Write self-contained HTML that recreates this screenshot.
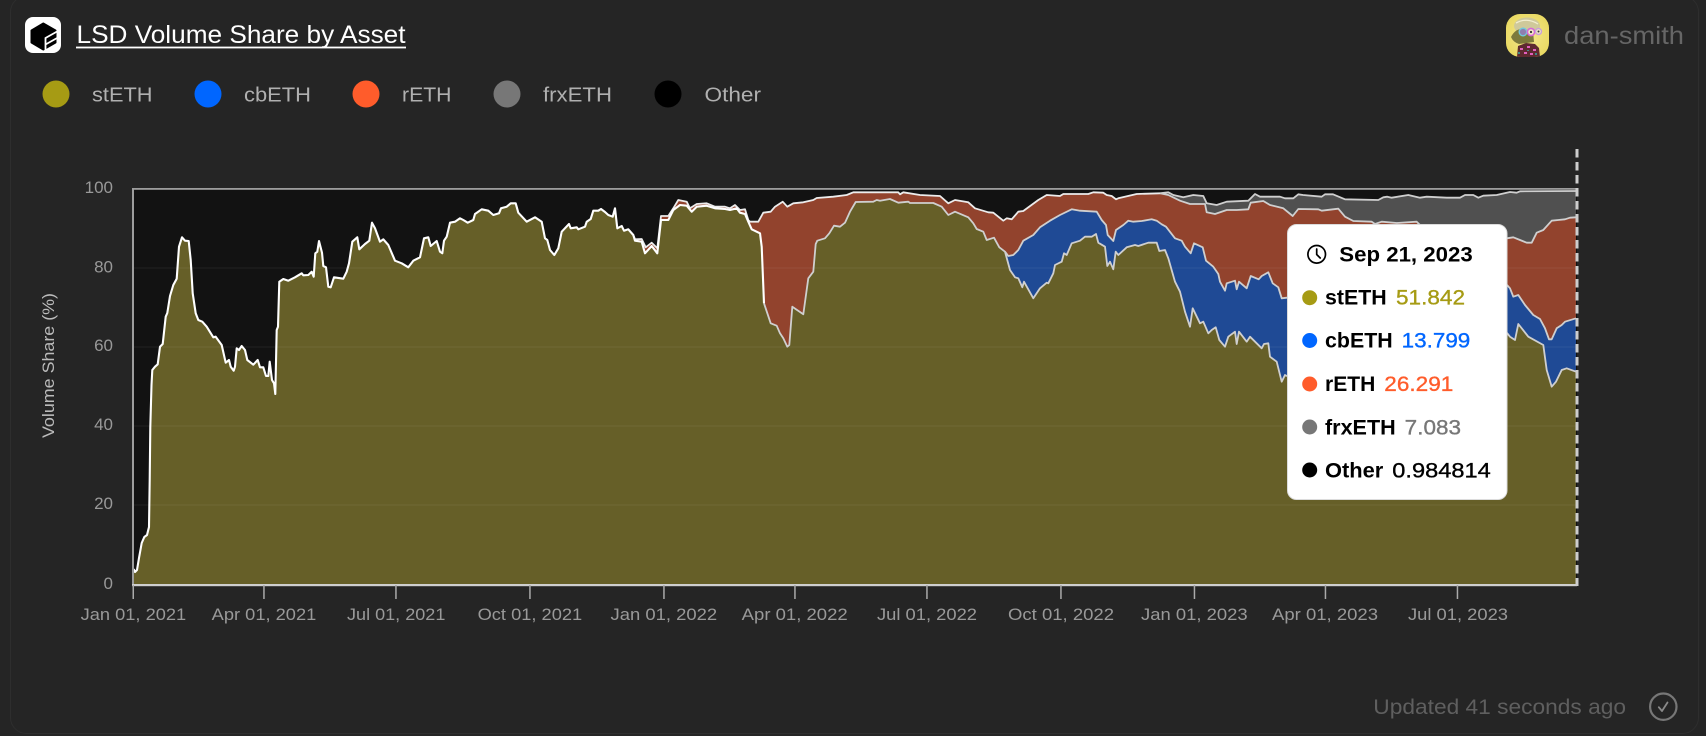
<!DOCTYPE html>
<html>
<head>
<meta charset="utf-8">
<title>LSD Volume Share by Asset</title>
<style>
html,body{margin:0;padding:0;background:#252525;width:1706px;height:736px;overflow:hidden}
svg{display:block}
text{font-family:"Liberation Sans",sans-serif}
.leg{font-size:20px;fill:#b0b0b0}
.tick{font-size:17px;fill:#999}
.lb{font-size:21px;font-weight:700;fill:#000}
.val{font-size:21px;stroke-width:.35}
</style>
</head>
<body>
<svg width="1706" height="736" viewBox="0 0 1706 736" xmlns="http://www.w3.org/2000/svg">
<defs>
<clipPath id="leftpart"><rect x="120" y="150" width="640" height="450"/></clipPath>
<clipPath id="av"><rect x="1506" y="14" width="43" height="43" rx="14"/></clipPath>
<radialGradient id="avg" cx="50%" cy="50%" r="65%"><stop offset="0" stop-color="#f3e88f"/><stop offset="1" stop-color="#e8d75c"/></radialGradient>
</defs>
<rect width="1706" height="736" fill="#252525"/>
<rect x="10.5" y="-4" width="1688" height="737.5" rx="16" fill="#252525" stroke="#2e2e2e" stroke-width="1"/>

<!-- header -->
<rect x="25" y="17" width="36" height="36" rx="8" fill="#fff"/>
<polygon points="43.3,23.5 55.5,30.5 55.5,42.5 43.3,49.5 31.5,42.5 31.5,30.5" fill="#000" stroke="#000" stroke-width="2" stroke-linejoin="round"/>
<path d="M45.5 52V38L58 31M45.5 44.5L58 37.5" fill="none" stroke="#fff" stroke-width="1.8"/>
<text x="76.5" y="43" font-size="25" fill="#fff" textLength="329" lengthAdjust="spacingAndGlyphs">LSD Volume Share by Asset</text>
<rect x="76" y="46.6" width="330" height="1.8" fill="#fff"/>

<g clip-path="url(#av)">
<rect x="1506" y="14" width="43" height="43" fill="url(#avg)"/>
<ellipse cx="1527" cy="26" rx="13" ry="8.5" fill="#cfc99a"/>
<path d="M1516 23Q1527 17 1538 24" fill="none" stroke="#f2eed0" stroke-width="1.3"/>
<path d="M1511 37Q1515 29 1522 29L1533 31L1534 42L1519 44Q1513 42 1511 37Z" fill="#7d7a3c"/>
<circle cx="1523" cy="32" r="3.8" fill="#8f7fb0" stroke="#71c9dc" stroke-width="1.4"/>
<circle cx="1531" cy="32" r="3.6" fill="#efe9c4" stroke="#d767d8" stroke-width="1.6"/>
<circle cx="1538.5" cy="31.5" r="3" fill="#efe9c4" stroke="#c9a0d8" stroke-width="1.4"/>
<circle cx="1531" cy="32" r="1.1" fill="#333"/>
<circle cx="1538.5" cy="31.5" r="1" fill="#333"/>
<path d="M1517 57L1518 46L1526 43L1535 44L1539 48L1540 57Z" fill="#5e2a30"/>
<path d="M1520 48h3v2h-3zM1527 46h3v2h-3zM1533 49h3v2h-3zM1524 52h3v2h-3zM1530 53h3v2h-3z" fill="#e25fc0"/>
<path d="M1518 52h2v2h-2zM1535 53h2v2h-2zM1527 50h2v1h-2z" fill="#3f8a88"/>
</g>
<text x="1564" y="44" font-size="25" fill="#666" textLength="120" lengthAdjust="spacingAndGlyphs">dan-smith</text>

<!-- legend -->
<circle cx="56" cy="94" r="13.5" fill="#a69b14"/>
<text class="leg" x="92" y="101.5" textLength="60.5" lengthAdjust="spacingAndGlyphs">stETH</text>
<circle cx="208" cy="94" r="13.5" fill="#0066ff"/>
<text class="leg" x="244" y="101.5" textLength="67" lengthAdjust="spacingAndGlyphs">cbETH</text>
<circle cx="366" cy="94" r="13.5" fill="#ff5c2b"/>
<text class="leg" x="402" y="101.5" textLength="49.5" lengthAdjust="spacingAndGlyphs">rETH</text>
<circle cx="507" cy="94" r="13.5" fill="#777"/>
<text class="leg" x="543" y="101.5" textLength="69" lengthAdjust="spacingAndGlyphs">frxETH</text>
<circle cx="668" cy="94" r="13.5" fill="#000"/>
<text class="leg" x="704.5" y="101.5" textLength="56.5" lengthAdjust="spacingAndGlyphs">Other</text>

<!-- plot -->
<rect x="133" y="189" width="1444" height="396" fill="#121212"/>

<!-- frx area -->
<polygon fill="#505050" points="1160,193.3 1168.3,192.3 1173.3,195 1183.3,197.3 1193.3,195 1203.3,196 1206.7,203.3 1216.7,205 1226.7,201.7 1248.3,200.7 1255,194 1260,196.7 1280,196.7 1285,198.3 1293.3,198.3 1298.3,194.3 1303,195 1321.7,196.7 1325,194.3 1333,194.3 1345,199.3 1378.3,200 1383.3,197.3 1387.3,196.7 1391.7,197.7 1408.3,195 1420,197.7 1426.7,196.7 1446.7,197.7 1460,197.7 1465,195 1473.3,195 1478.3,197.7 1483.3,195.7 1496.7,195 1510,192 1516.7,192.7 1520,191.3 1576,191 1576,300 1160,300"/>

<!-- red area -->
<polygon fill="#92432d" points="633.3,235 635,239.3 641.7,239 645.7,247.3 651.7,242.7 657.3,248.3 661,216 668.3,216 673.3,208.3 678.3,200 686.7,201.7 690,208.3 696.7,204 706.7,203.3 715,206.7 725,206.7 730,208.3 735,205 740,210 745,209.3 748.3,220 750,221.7 758.3,221.7 763.3,212.7 770.7,211.7 775,206.7 782.7,201.7 787.3,206.7 793.3,203.3 803.3,202.3 813.3,200 816.7,198 833.3,196.7 846.7,195 853.3,192.3 898.3,192.3 900,194.3 903.3,192.3 920,195 940,196 948.3,203.3 955,200 968.3,202.3 975,208.3 988.3,212.3 993.3,212.7 1003.3,220.7 1006.7,218.3 1011.7,219.3 1018.3,211.7 1023.3,211 1038.3,200 1046.7,195 1060,196 1063.3,194 1088.3,194 1093.3,192.3 1103.3,192.7 1106.7,195 1111.7,196 1116,199.3 1118.3,198.3 1136.7,194 1160,193.3 1168.3,195 1180,200.7 1190,204 1205,204 1206.7,212.3 1215,214 1226.7,210 1236.7,210 1248.3,209.3 1250.7,202.7 1263.3,201 1270,205 1283.3,208.3 1292.7,216 1298.3,209 1318.3,209.3 1321.7,210.7 1338.3,208.7 1345,216.7 1353.3,221 1371.7,221.7 1375,224 1381.7,221.7 1396.7,223 1416.7,221.7 1420,225 1507,238.3 1513.3,237.3 1520,240 1526.7,242.7 1531.7,242.7 1536.7,232.7 1543.3,230 1551.7,220.7 1558.3,220 1565,219.3 1570,217.7 1576,217.3 1576,585 633,585"/>

<!-- blue area -->
<polygon fill="#1f4a95" points="1005,251.7 1008.3,256 1013.3,255 1018.3,250 1023.3,240.7 1033.3,235 1040,227.3 1050,220.7 1060,215 1071.7,209.3 1080,210.7 1096.7,211.7 1101.7,220 1106,225 1107.7,235 1113.3,241 1116,230 1123.3,225 1128.3,220.7 1133.3,221.7 1141.7,221 1151.7,219.3 1156.7,220.7 1161.7,224.3 1166,226.7 1175,238.3 1181.7,240.7 1185,246.7 1190.7,253.3 1194,243.3 1202.7,247.3 1206,260.7 1213.3,266.7 1218.3,274 1220,281.7 1225,290.7 1226.7,283.3 1235,280.7 1236.7,289.3 1239,281.7 1246.7,288.3 1250.7,276 1258.7,279.3 1261.7,276 1268.3,272.3 1272.7,283.3 1278.3,287.3 1281.7,298.3 1287,297.7 1507,285 1510,288.3 1513.3,296.7 1518.3,295 1525,305 1533.3,315 1540,319 1545,328.3 1549,339.3 1551.7,339.3 1556.7,328.3 1561.7,325 1565,321.7 1576,318.3 1576,585 1005,585"/>

<!-- stETH area -->
<polygon fill="#665f28" points="133.7,569 135,572 137,570 139,558 141.7,543 144.3,537 147,535 149,527 149.7,480 150.3,427 151.5,385 152.3,370 155,366.7 157.7,364.3 160,346.7 162.7,344 165.7,316.7 167.3,313 170,296 173.3,285 176.7,278.7 179,246.7 182,237.3 185,240.7 188.7,241 190.7,260 192.7,293.3 195.7,313.3 198.3,320 202.3,321.7 206.7,326.7 213.3,337.3 215.7,336.7 221.7,345 225.7,362.7 229,360 230.7,366.7 233.7,370.7 235,366.7 236.7,348.3 239,350 241.7,346 245,350 247.3,360 253.3,364.7 257.7,360 260,367.3 263.3,367.3 266,376 268.3,376 269.7,361.7 272,380 274,383.3 275.3,394 276.7,330 278,326.7 279.3,281.7 283.3,279 288.3,280.7 295,277.3 301.7,273.3 303.3,275.3 308.3,275 311.7,271.7 313.7,276.7 315.3,253.3 317.3,251.7 319,241 322,252.7 323.3,266 326,267.3 328.3,286.7 330.7,287.3 334,277.3 343.3,278.7 346.7,271.7 349,263.3 352.3,241.7 357.3,237.3 359.3,249.3 365,244 369.3,240.7 372,222.7 375,228.3 380,241.7 383.3,239.3 388.3,245 393.3,256.7 395,260.7 401.7,263.3 408.3,267.3 413.3,260.7 420,257.3 424,238.3 428.3,237.3 430.7,246 436.7,241 440,251.7 442.3,253.3 444,240.7 446.7,236.7 450,222.7 455,221.7 460,218.3 463.3,220 467.7,222.7 473.3,220 475,214 481.7,209.3 488.3,210.7 493.3,215 499,213.3 501,208.3 506.7,206.7 510.7,203.3 515.7,203.3 518.3,212.7 526.7,221.7 535,217.3 541.7,221.7 545,238.3 547.3,240 550,250 554.3,255 558.3,248.3 561.7,231.7 569,224 570.7,228.3 576.7,227.3 578.3,229.3 585,226.7 586.7,221.7 590.7,219 593.3,210.7 598.3,210.7 601,209 605,212 608.3,215 612.7,216.7 615,208.3 617.3,228.3 621.7,226 624,230.7 628.3,229.3 633.3,235 635,240.7 641.7,241.7 645,253.3 651.7,246 657.3,253.3 661,220 668.3,220 673.3,210 680,205 686.7,205.7 691.7,211.7 696.7,206.7 706.7,205.7 715,208.3 725,209 730,210 736.7,208.3 740,212.7 745,214 748.3,221.7 751.7,229.3 760,233.3 761.7,246.7 764,303.3 770.7,323.3 776.7,325.7 780,333.3 783.3,338.3 787.3,346.7 789.3,345 792.3,306.7 803.3,314.3 808.3,278.3 813.3,271.7 815.7,244 817.3,240.7 825,238.3 829.3,233.3 834,225.7 840,226.7 845,222.7 850,211.7 855.7,202 873.3,201.7 876.7,200 880,200.7 890,199 898.3,202.7 908.3,201.7 910,203 933.3,203 941.7,206.7 948.3,215 955,211.7 968.3,217.3 973.3,223.3 976.7,229 983.3,231.7 986.7,240 994,237.7 999.3,247.3 1005,251.7 1010,270 1015,277.3 1018.3,278.3 1022.3,287.3 1024,281.7 1033.3,298.3 1040,288.3 1046.7,282.7 1048.3,283.3 1053.3,273.3 1055,265 1061.7,261.7 1064,253.3 1066.7,255 1071.7,243.3 1080,240.7 1085,236.7 1091.7,236.7 1096,234 1098.3,242.7 1105,246.7 1107.3,266 1110,261.7 1113.3,269.3 1115.7,251.7 1118.3,255 1126.7,247.3 1135,245 1138.3,246 1148.3,242.7 1156.7,242.7 1159.3,251 1165,250 1168.3,258.3 1175,281.7 1180,291.7 1185,311.7 1190,326.7 1192.7,308.3 1200,323.3 1203.3,321.7 1208.3,333.3 1211.7,330 1215.7,327.3 1219.3,340 1225,346.7 1228.3,336.7 1235,331.7 1236.7,344 1239,331.7 1246.7,341.7 1250,336.7 1261.7,348.3 1264,344 1268.3,343.3 1270,356.7 1276.7,361.7 1281.7,381.7 1285,375 1287,376 1507,333 1510,336.7 1515,340 1518.3,324 1528.3,336.7 1543.3,345 1546.7,370 1551.7,386.7 1556,381.7 1561.7,370 1566.7,368.3 1576,371.7 1576,585 133,585"/>

<!-- gridlines -->
<g fill="#fff" fill-opacity=".035">
<rect x="134" y="267" width="1442" height="2"/>
<rect x="134" y="346" width="1442" height="2"/>
<rect x="134" y="425" width="1442" height="2"/>
<rect x="134" y="504" width="1442" height="2"/>
</g>

<!-- lines -->
<g fill="none" stroke-linejoin="round">
<polyline stroke="#cfcfcf" stroke-width="1.8" points="1160,193.3 1168.3,192.3 1173.3,195 1183.3,197.3 1193.3,195 1203.3,196 1206.7,203.3 1216.7,205 1226.7,201.7 1248.3,200.7 1255,194 1260,196.7 1280,196.7 1285,198.3 1293.3,198.3 1298.3,194.3 1303,195 1321.7,196.7 1325,194.3 1333,194.3 1345,199.3 1378.3,200 1383.3,197.3 1387.3,196.7 1391.7,197.7 1408.3,195 1420,197.7 1426.7,196.7 1446.7,197.7 1460,197.7 1465,195 1473.3,195 1478.3,197.7 1483.3,195.7 1496.7,195 1510,192 1516.7,192.7 1520,191.3 1576,191"/>
<polyline stroke="#ececec" stroke-width="1.8" points="633.3,235 635,239.3 641.7,239 645.7,247.3 651.7,242.7 657.3,248.3 661,216 668.3,216 673.3,208.3 678.3,200 686.7,201.7 690,208.3 696.7,204 706.7,203.3 715,206.7 725,206.7 730,208.3 735,205 740,210 745,209.3 748.3,220 750,221.7 758.3,221.7 763.3,212.7 770.7,211.7 775,206.7 782.7,201.7 787.3,206.7 793.3,203.3 803.3,202.3 813.3,200 816.7,198 833.3,196.7 846.7,195 853.3,192.3 898.3,192.3 900,194.3 903.3,192.3 920,195 940,196 948.3,203.3 955,200 968.3,202.3 975,208.3 988.3,212.3 993.3,212.7 1003.3,220.7 1006.7,218.3 1011.7,219.3 1018.3,211.7 1023.3,211 1038.3,200 1046.7,195 1060,196 1063.3,194 1088.3,194 1093.3,192.3 1103.3,192.7 1106.7,195 1111.7,196 1116,199.3 1118.3,198.3 1136.7,194 1160,193.3"/>
<polyline stroke="#cfcfcf" stroke-width="1.8" points="1160,193.3 1168.3,195 1180,200.7 1190,204 1205,204 1206.7,212.3 1215,214 1226.7,210 1236.7,210 1248.3,209.3 1250.7,202.7 1263.3,201 1270,205 1283.3,208.3 1292.7,216 1298.3,209 1318.3,209.3 1321.7,210.7 1338.3,208.7 1345,216.7 1353.3,221 1371.7,221.7 1375,224 1381.7,221.7 1396.7,223 1416.7,221.7 1420,225 1507,238.3 1513.3,237.3 1520,240 1526.7,242.7 1531.7,242.7 1536.7,232.7 1543.3,230 1551.7,220.7 1558.3,220 1565,219.3 1570,217.7 1576,217.3"/>
<polyline stroke="#cfcfcf" stroke-width="1.8" points="1005,251.7 1008.3,256 1013.3,255 1018.3,250 1023.3,240.7 1033.3,235 1040,227.3 1050,220.7 1060,215 1071.7,209.3 1080,210.7 1096.7,211.7 1101.7,220 1106,225 1107.7,235 1113.3,241 1116,230 1123.3,225 1128.3,220.7 1133.3,221.7 1141.7,221 1151.7,219.3 1156.7,220.7 1161.7,224.3 1166,226.7 1175,238.3 1181.7,240.7 1185,246.7 1190.7,253.3 1194,243.3 1202.7,247.3 1206,260.7 1213.3,266.7 1218.3,274 1220,281.7 1225,290.7 1226.7,283.3 1235,280.7 1236.7,289.3 1239,281.7 1246.7,288.3 1250.7,276 1258.7,279.3 1261.7,276 1268.3,272.3 1272.7,283.3 1278.3,287.3 1281.7,298.3 1287,297.7 1507,285 1510,288.3 1513.3,296.7 1518.3,295 1525,305 1533.3,315 1540,319 1545,328.3 1549,339.3 1551.7,339.3 1556.7,328.3 1561.7,325 1565,321.7 1576,318.3"/>
<polyline stroke="#cfcfcf" stroke-width="1.8" points="764,303.3 770.7,323.3 776.7,325.7 780,333.3 783.3,338.3 787.3,346.7 789.3,345 792.3,306.7 803.3,314.3 808.3,278.3 813.3,271.7 815.7,244 817.3,240.7 825,238.3 829.3,233.3 834,225.7 840,226.7 845,222.7 850,211.7 855.7,202 873.3,201.7 876.7,200 880,200.7 890,199 898.3,202.7 908.3,201.7 910,203 933.3,203 941.7,206.7 948.3,215 955,211.7 968.3,217.3 973.3,223.3 976.7,229 983.3,231.7 986.7,240 994,237.7 999.3,247.3 1005,251.7 1010,270 1015,277.3 1018.3,278.3 1022.3,287.3 1024,281.7 1033.3,298.3 1040,288.3 1046.7,282.7 1048.3,283.3 1053.3,273.3 1055,265 1061.7,261.7 1064,253.3 1066.7,255 1071.7,243.3 1080,240.7 1085,236.7 1091.7,236.7 1096,234 1098.3,242.7 1105,246.7 1107.3,266 1110,261.7 1113.3,269.3 1115.7,251.7 1118.3,255 1126.7,247.3 1135,245 1138.3,246 1148.3,242.7 1156.7,242.7 1159.3,251 1165,250 1168.3,258.3 1175,281.7 1180,291.7 1185,311.7 1190,326.7 1192.7,308.3 1200,323.3 1203.3,321.7 1208.3,333.3 1211.7,330 1215.7,327.3 1219.3,340 1225,346.7 1228.3,336.7 1235,331.7 1236.7,344 1239,331.7 1246.7,341.7 1250,336.7 1261.7,348.3 1264,344 1268.3,343.3 1270,356.7 1276.7,361.7 1281.7,381.7 1285,375 1287,376 1507,333 1510,336.7 1515,340 1518.3,324 1528.3,336.7 1543.3,345 1546.7,370 1551.7,386.7 1556,381.7 1561.7,370 1566.7,368.3 1576,371.7"/>
<polyline stroke="#fff" stroke-width="2.1" points="133.7,569 135,572 137,570 139,558 141.7,543 144.3,537 147,535 149,527 149.7,480 150.3,427 151.5,385 152.3,370 155,366.7 157.7,364.3 160,346.7 162.7,344 165.7,316.7 167.3,313 170,296 173.3,285 176.7,278.7 179,246.7 182,237.3 185,240.7 188.7,241 190.7,260 192.7,293.3 195.7,313.3 198.3,320 202.3,321.7 206.7,326.7 213.3,337.3 215.7,336.7 221.7,345 225.7,362.7 229,360 230.7,366.7 233.7,370.7 235,366.7 236.7,348.3 239,350 241.7,346 245,350 247.3,360 253.3,364.7 257.7,360 260,367.3 263.3,367.3 266,376 268.3,376 269.7,361.7 272,380 274,383.3 275.3,394 276.7,330 278,326.7 279.3,281.7 283.3,279 288.3,280.7 295,277.3 301.7,273.3 303.3,275.3 308.3,275 311.7,271.7 313.7,276.7 315.3,253.3 317.3,251.7 319,241 322,252.7 323.3,266 326,267.3 328.3,286.7 330.7,287.3 334,277.3 343.3,278.7 346.7,271.7 349,263.3 352.3,241.7 357.3,237.3 359.3,249.3 365,244 369.3,240.7 372,222.7 375,228.3 380,241.7 383.3,239.3 388.3,245 393.3,256.7 395,260.7 401.7,263.3 408.3,267.3 413.3,260.7 420,257.3 424,238.3 428.3,237.3 430.7,246 436.7,241 440,251.7 442.3,253.3 444,240.7 446.7,236.7 450,222.7 455,221.7 460,218.3 463.3,220 467.7,222.7 473.3,220 475,214 481.7,209.3 488.3,210.7 493.3,215 499,213.3 501,208.3 506.7,206.7 510.7,203.3 515.7,203.3 518.3,212.7 526.7,221.7 535,217.3 541.7,221.7 545,238.3 547.3,240 550,250 554.3,255 558.3,248.3 561.7,231.7 569,224 570.7,228.3 576.7,227.3 578.3,229.3 585,226.7 586.7,221.7 590.7,219 593.3,210.7 598.3,210.7 601,209 605,212 608.3,215 612.7,216.7 615,208.3 617.3,228.3 621.7,226 624,230.7 628.3,229.3 633.3,235 635,240.7 641.7,241.7 645,253.3 651.7,246 657.3,253.3 661,220 668.3,220 673.3,210 680,205 686.7,205.7 691.7,211.7 696.7,206.7 706.7,205.7 715,208.3 725,209 730,210 736.7,208.3 740,212.7 745,214 748.3,221.7 751.7,229.3 760,233.3 761.7,246.7 764,303.3"/>
</g>

<!-- axes -->
<rect x="132" y="188" width="1445" height="1.8" fill="#9d9d9d"/>
<rect x="132" y="188" width="2" height="397" fill="#9d9d9d"/>
<rect x="132" y="584" width="1445" height="2.2" fill="#cfcfcf"/>
<line x1="1577" y1="149" x2="1577" y2="586" stroke="#cdcdcd" stroke-width="3" stroke-dasharray="8.5 4.5"/>

<!-- y ticks -->
<text class="tick" x="113" y="193" text-anchor="end">100</text>
<text class="tick" x="113" y="272.5" text-anchor="end">80</text>
<text class="tick" x="113" y="351" text-anchor="end">60</text>
<text class="tick" x="113" y="430" text-anchor="end">40</text>
<text class="tick" x="113" y="509" text-anchor="end">20</text>
<text class="tick" x="113" y="589" text-anchor="end">0</text>
<text transform="translate(54 438) rotate(-90)" font-size="17" fill="#bbb" textLength="145" lengthAdjust="spacingAndGlyphs">Volume Share (%)</text>

<!-- x ticks -->
<g fill="#aaa">
<rect x="132.5" y="585" width="1.5" height="14"/>
<rect x="263.2" y="585" width="1.5" height="14"/>
<rect x="395.2" y="585" width="1.5" height="14"/>
<rect x="529.2" y="585" width="1.5" height="14"/>
<rect x="663.2" y="585" width="1.5" height="14"/>
<rect x="794.2" y="585" width="1.5" height="14"/>
<rect x="926.2" y="585" width="1.5" height="14"/>
<rect x="1060.2" y="585" width="1.5" height="14"/>
<rect x="1193.7" y="585" width="1.5" height="14"/>
<rect x="1324.7" y="585" width="1.5" height="14"/>
<rect x="1456.7" y="585" width="1.5" height="14"/>
</g>
<text class="tick" x="80.6" y="620" textLength="105.6" lengthAdjust="spacingAndGlyphs">Jan 01, 2021</text>
<text class="tick" x="211.7" y="620" textLength="104.6" lengthAdjust="spacingAndGlyphs">Apr 01, 2021</text>
<text class="tick" x="347" y="620" textLength="98.4" lengthAdjust="spacingAndGlyphs">Jul 01, 2021</text>
<text class="tick" x="477.6" y="620" textLength="104.6" lengthAdjust="spacingAndGlyphs">Oct 01, 2021</text>
<text class="tick" x="610.5" y="620" textLength="106.6" lengthAdjust="spacingAndGlyphs">Jan 01, 2022</text>
<text class="tick" x="741.7" y="620" textLength="106" lengthAdjust="spacingAndGlyphs">Apr 01, 2022</text>
<text class="tick" x="877" y="620" textLength="100" lengthAdjust="spacingAndGlyphs">Jul 01, 2022</text>
<text class="tick" x="1008" y="620" textLength="106" lengthAdjust="spacingAndGlyphs">Oct 01, 2022</text>
<text class="tick" x="1141" y="620" textLength="106.6" lengthAdjust="spacingAndGlyphs">Jan 01, 2023</text>
<text class="tick" x="1272" y="620" textLength="106" lengthAdjust="spacingAndGlyphs">Apr 01, 2023</text>
<text class="tick" x="1408" y="620" textLength="100" lengthAdjust="spacingAndGlyphs">Jul 01, 2023</text>

<!-- tooltip -->
<rect x="1287.5" y="224.5" width="219.5" height="275" rx="9" fill="#fff" stroke="#dcdcdc" stroke-width="1"/>
<circle cx="1316.7" cy="254.3" r="8.8" fill="none" stroke="#000" stroke-width="1.7"/>
<path d="M1316.7 249V254.5L1320.2 258" fill="none" stroke="#000" stroke-width="1.7" stroke-linecap="round" stroke-linejoin="round"/>
<text class="lb" x="1339.3" y="261.7" textLength="133.4" lengthAdjust="spacingAndGlyphs">Sep 21, 2023</text>

<circle cx="1309.7" cy="297.7" r="7.5" fill="#a69b14"/>
<text class="lb" x="1325" y="304.7" textLength="61.7" lengthAdjust="spacingAndGlyphs">stETH</text>
<text class="val" x="1396" y="304.7" fill="#a69b14" stroke="#a69b14" textLength="69" lengthAdjust="spacingAndGlyphs">51.842</text>

<circle cx="1309.7" cy="340.5" r="7.5" fill="#0066ff"/>
<text class="lb" x="1325" y="347.7" textLength="67.7" lengthAdjust="spacingAndGlyphs">cbETH</text>
<text class="val" x="1401.7" y="347.7" fill="#0066ff" stroke="#0066ff" textLength="68.6" lengthAdjust="spacingAndGlyphs">13.799</text>

<circle cx="1309.7" cy="384" r="7.5" fill="#ff5c2b"/>
<text class="lb" x="1325" y="391" textLength="50.3" lengthAdjust="spacingAndGlyphs">rETH</text>
<text class="val" x="1384.3" y="391" fill="#ff5c2b" stroke="#ff5c2b" textLength="69" lengthAdjust="spacingAndGlyphs">26.291</text>

<circle cx="1309.7" cy="427" r="7.5" fill="#777"/>
<text class="lb" x="1325" y="434.7" textLength="70.7" lengthAdjust="spacingAndGlyphs">frxETH</text>
<text class="val" x="1404.7" y="434.7" fill="#777" stroke="#777" textLength="56.3" lengthAdjust="spacingAndGlyphs">7.083</text>

<circle cx="1309.7" cy="470" r="7.5" fill="#000"/>
<text class="lb" x="1325" y="477.7" textLength="58.3" lengthAdjust="spacingAndGlyphs">Other</text>
<text class="val" x="1392.3" y="477.7" fill="#000" stroke="#000" textLength="98.4" lengthAdjust="spacingAndGlyphs">0.984814</text>

<!-- footer -->
<text x="1373.3" y="714" font-size="21" fill="#5f5f5f" textLength="252.7" lengthAdjust="spacingAndGlyphs">Updated 41 seconds ago</text>
<circle cx="1663.3" cy="706.7" r="13.2" fill="none" stroke="#777" stroke-width="2.2"/>
<path d="M1658.8 707.2L1662 711L1667.5 702.5" fill="none" stroke="#8a8a8a" stroke-width="1.8" stroke-linecap="round" stroke-linejoin="round"/>
</svg>
</body>
</html>
